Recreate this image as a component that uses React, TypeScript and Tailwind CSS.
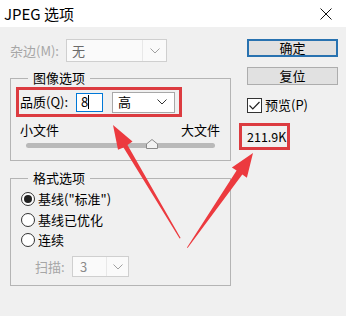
import React from "react";

const Chevron = ({ color = "#333" }: { color?: string }) => (
  <svg width="10" height="6" viewBox="0 0 10 6" className="block">
    <polyline points="0.5,0.5 5,5 9.5,0.5" fill="none" stroke={color} strokeWidth="1" />
  </svg>
);

const Radio = ({ checked }: { checked?: boolean }) => (
  <span className="w-[14px] h-[14px] rounded-full border border-[#333] bg-white flex items-center justify-center shrink-0">
    {checked && <span className="w-[8px] h-[8px] rounded-full bg-[#222]" />}
  </span>
);

export default function App() {
  return (
    <div
      className="relative w-[346px] h-[316px] overflow-hidden bg-[#f0f0f0] text-[13px] text-black"
      style={{ fontFamily: '"Noto Sans CJK SC", "Noto Sans", sans-serif' }}
    >
      {/* title bar */}
      <div className="h-[27px] bg-white flex items-center justify-between pl-[4px] pr-[14px]">
        <span className="text-[15px] leading-[20px]">JPEG 选项</span>
        <svg width="12" height="12" viewBox="0 0 12 12" className="block">
          <line x1="0.5" y1="0.5" x2="11.5" y2="11.5" stroke="#111" strokeWidth="1" />
          <line x1="11.5" y1="0.5" x2="0.5" y2="11.5" stroke="#111" strokeWidth="1" />
        </svg>
      </div>

      <div className="flex">
        {/* left column */}
        <div className="ml-[10px] w-[221px]">
          <div className="flex items-center h-[23px] mt-[12px]">
            <span className="w-[56px] leading-[16px] text-[#a6a6a6]">杂边(M):</span>
            <div className="w-[101px] h-[23px] border border-[#cfcfcf] bg-[#fafafa] flex items-center">
              <span className="pl-[5px] flex-1 text-[#6a6a6a] leading-[16px]">无</span>
              <span className="w-px h-[21px] bg-[#e8e8e8]" />
              <span className="w-[23px] flex justify-center">
                <Chevron color="#a0a0a0" />
              </span>
            </div>
          </div>

          {/* image options */}
          <fieldset className="mt-[8px] border border-[#b4b4b4] px-0 pt-0 pb-[9px]">
            <legend className="ml-[17px] px-[5px] leading-[16px]">图像选项</legend>
            <div className="ml-[5px] mt-[1px] w-[166px] h-[30px] border-[3px] border-[#dc3b40] flex items-center pl-[1px]">
              <span className="w-[56px] leading-[16px]">品质(Q):</span>
              <div className="w-[27px] h-[19px] border border-[#0078d7] bg-white flex items-center pl-[4px]">
                <span className="leading-[16px]">8</span>
                <span className="w-px h-[14px] bg-black" />
              </div>
              <div className="ml-[9px] w-[63px] h-[21px] border border-[#a8a8a8] bg-white flex items-center justify-between pl-[5px] pr-[7px]">
                <span className="leading-[16px]">高</span>
                <Chevron />
              </div>
            </div>
            <div className="flex justify-between mt-[5px] pl-[9px] pr-[10px] leading-[16px]">
              <span>小文件</span>
              <span>大文件</span>
            </div>
            <div className="relative mx-[15px] mt-[1px] h-[12px] flex items-center">
              <div className="w-full h-[5px] rounded-full bg-[#b9b9b9]" />
              <svg width="12" height="10" viewBox="0 0 12 10" className="absolute left-[120px] top-[0px]">
                <polygon points="6,0.5 11.5,5 11.5,9.5 0.5,9.5 0.5,5" fill="#f2f2f2" stroke="#8a8a8a" strokeWidth="1" />
              </svg>
            </div>
          </fieldset>

          {/* format options */}
          <fieldset className="mt-[9px] border border-[#b4b4b4] px-0 pt-0 pb-[8px]">
            <legend className="ml-[17px] px-[5px] leading-[16px]">格式选项</legend>
            <div className="mt-[3px] pl-[10px]">
              <div className="h-[20.5px] flex items-center gap-[3px]">
                <Radio checked />
                <span className="leading-[16px]">基线("标准")</span>
              </div>
              <div className="h-[20.5px] flex items-center gap-[3px]">
                <Radio />
                <span className="leading-[16px]">基线已优化</span>
              </div>
              <div className="h-[20.5px] flex items-center gap-[3px]">
                <Radio />
                <span className="leading-[16px]">连续</span>
              </div>
            </div>
            <div className="mt-[5.5px] pl-[24px] flex items-center">
              <span className="w-[37px] leading-[16px] text-[#a6a6a6]">扫描:</span>
              <div className="w-[57px] h-[21px] border border-[#cfcfcf] bg-[#fafafa] flex items-center">
                <span className="pl-[7px] flex-1 text-[#8a8a8a] leading-[16px]">3</span>
                <span className="w-px h-[19px] bg-[#e8e8e8]" />
                <span className="w-[21px] flex justify-center">
                  <Chevron color="#a0a0a0" />
                </span>
              </div>
            </div>
          </fieldset>
        </div>

        {/* right column */}
        <div className="ml-[16px] w-[91px] flex flex-col">
          <div className="mt-[12px] h-[18px] border-2 border-[#2872b0] bg-[#e1e1e1] flex items-center justify-center leading-[14px]">
            确定
          </div>
          <div className="mt-[10px] h-[18px] border border-[#adadad] bg-[#e1e1e1] flex items-center justify-center leading-[14px]">
            复位
          </div>
          <div className="mt-[12px] flex items-center gap-[3px]">
            <span className="w-[15px] h-[15px] border border-[#333] bg-white flex items-center justify-center">
              <svg width="11" height="9" viewBox="0 0 11 9" className="block">
                <polyline points="0.5,4.5 3.8,7.8 10.5,1" fill="none" stroke="#222" strokeWidth="1.2" />
              </svg>
            </span>
            <span className="leading-[16px]">预览(P)</span>
          </div>
          <div className="mt-[10px] -ml-[8px] w-[51px] h-[27px] border-[3px] border-[#dc3b40] flex items-center pl-[5px]">
            <span className="leading-[16px] text-[12.5px]">211.9K</span>
          </div>
        </div>
      </div>

      {/* annotation arrows */}
      <svg className="absolute inset-0 pointer-events-none" width="346" height="316" viewBox="0 0 346 316">
        <polygon
          points="113,125 132.5,141.5 127.5,145 180.6,238 179.6,238.4 123.5,147.5 118,149.8"
          fill="#ec3a3f"
        />
        <polygon
          points="253,153 246.9,177.8 242.3,174.5 187.6,248 187,247.6 236.6,170.6 231.9,167.6"
          fill="#ec3a3f"
        />
      </svg>
    </div>
  );
}
